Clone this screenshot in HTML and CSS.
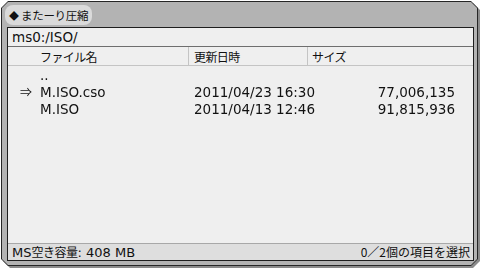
FILE: index.html
```html
<!DOCTYPE html>
<html lang="ja">
<head>
<meta charset="utf-8">
<link rel="stylesheet" href="styles.css">
</head>
<body>
<div class="screen">
  <div class="frame-outer">
    <div class="frame">
      <div class="title-row">
        <div class="title-pill"><span class="diamond">◆</span> またーり圧縮</div>
      </div>
      <div class="panel">
        <div class="path">ms0:/ISO/</div>
        <div class="header">
          <div class="hcell hname">ファイル名</div>
          <div class="hcell hdate">更新日時</div>
          <div class="hcell hsize">サイズ</div>
        </div>
        <div class="list">
          <div class="row">
            <div class="mark"></div>
            <div class="name">..</div>
            <div class="date"></div>
            <div class="size"></div>
          </div>
          <div class="row">
            <div class="mark">⇒</div>
            <div class="name">M.ISO.cso</div>
            <div class="date">2011/04/23 16:30</div>
            <div class="size">77,006,135</div>
          </div>
          <div class="row">
            <div class="mark"></div>
            <div class="name">M.ISO</div>
            <div class="date">2011/04/13 12:46</div>
            <div class="size">91,815,936</div>
          </div>
        </div>
        <div class="status">
          <div class="free">MS<span class="jp">空き容量</span>: 408 MB</div>
          <div class="sel">0／2個の項目を選択</div>
        </div>
      </div>
    </div>
  </div>
</div>
</body>
</html>
```

FILE: styles.css
```css
html, body {
  margin: 0;
  padding: 0;
}
body {
  width: 480px;
  height: 272px;
  background: #ffffff;
  overflow: hidden;
  font-family: "DejaVu Sans", "Noto Sans CJK JP", sans-serif;
  color: #111111;
}
.screen {
  box-sizing: border-box;
  width: 480px;
  height: 272px;
  padding: 1px 2px 6px 1px;
  filter: drop-shadow(2px 2px 0 #8a8a8a);
}
.frame-outer {
  box-sizing: border-box;
  height: 100%;
  padding: 1px;
  background: #262626;
  clip-path: polygon(7px 0, calc(100% - 7px) 0, 100% 7px, 100% calc(100% - 7px), calc(100% - 7px) 100%, 7px 100%, 0 calc(100% - 7px), 0 7px);
}
.frame {
  box-sizing: border-box;
  height: 100%;
  background: #b3b3b3;
  clip-path: polygon(6px 0, calc(100% - 6px) 0, 100% 6px, 100% calc(100% - 6px), calc(100% - 6px) 100%, 6px 100%, 0 calc(100% - 6px), 0 6px);
  display: flex;
  flex-direction: column;
  padding: 3px 3px 4px 5px;
}
.title-row {
  display: flex;
  margin-left: -2px;
}
.title-pill {
  height: 20px;
  line-height: 20px;
  padding: 0 4px 0 4px;
  background: #dadada;
  border-radius: 8px;
  font-family: "Noto Sans CJK JP", sans-serif;
  font-size: 11.5px;
  letter-spacing: -0.3px;
  color: #111;
}
.diamond {
  font-size: 10px;
}
.panel {
  flex: 1;
  display: flex;
  flex-direction: column;
  border: 1px solid #1e1e1e;
  background: #efefef;
  margin-top: 2px;
  font-size: 13.5px;
}
.path {
  height: 18px;
  line-height: 19px;
  padding-left: 4px;
  border-bottom: 1px solid #6e6e6e;
}
.header {
  display: grid;
  grid-template-columns: 181px 119px 1fr;
  height: 18px;
  border-bottom: 1px solid #c4c4c4;
  font-family: "Noto Sans CJK JP", sans-serif;
  font-size: 12px;
  letter-spacing: -0.6px;
}
.hcell {
  line-height: 19px;
}
.hname {
  padding-left: 32px;
  border-right: 1px solid #c4c4c4;
}
.hdate {
  padding-left: 5px;
  border-right: 1px solid #c4c4c4;
}
.hsize {
  padding-left: 4px;
}
.list {
  flex: 1;
}
.row {
  display: grid;
  grid-template-columns: 32px 154px 126px 1fr;
  height: 17px;
  line-height: 18px;
  overflow: hidden;
}
.mark {
  padding-left: 12px;
  font-family: "Noto Sans CJK JP", sans-serif;
  font-size: 12px;
}
.size {
  text-align: right;
  padding-right: 18px;
}
.status {
  display: flex;
  justify-content: space-between;
  height: 16px;
  line-height: 16px;
  padding: 0 3px 0 4px;
  background: #dedede;
  border-top: 1px solid #a8a8a8;
  font-size: 13px;
}
.jp {
  font-family: "Noto Sans CJK JP", sans-serif;
  font-size: 12px;
  letter-spacing: -0.5px;
}
.sel {
  font-family: "Noto Sans CJK JP", sans-serif;
  font-size: 12px;
}
```
